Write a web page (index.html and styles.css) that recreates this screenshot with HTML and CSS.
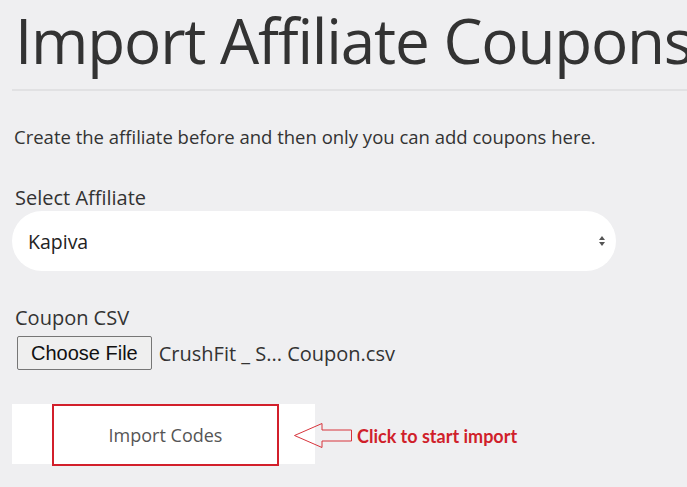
FILE: index.html
```html
<!DOCTYPE html>
<html>
<head>
<meta charset="utf-8">
<link rel="stylesheet" href="styles.css">
</head>
<body>
<div class="page">
  <h1 class="title">Import Affiliate Coupons</h1>
  <div class="divider"></div>
  <p class="intro">Create the affiliate before and then only you can add coupons here.</p>
  <div class="field field-select">
    <label class="label">Select Affiliate</label>
    <div class="select">
      <span class="select-value">Kapiva</span>
      <svg class="select-arrows" width="8" height="12" viewBox="0 0 8 12"><path d="M4 1 L7 5 L1 5 Z M4 11 L7 7 L1 7 Z" fill="#555"/></svg>
    </div>
  </div>
  <div class="field field-file">
    <label class="label">Coupon CSV</label>
    <div class="file">
      <span class="file-btn">Choose File</span>
      <span class="file-name">CrushFit _ S... Coupon.csv</span>
    </div>
  </div>
  <div class="actions">
    <div class="import-box">
      <span class="import-btn">Import Codes</span>
    </div>
    <div class="hint">
      <svg class="hint-arrow" width="60" height="28" viewBox="0 0 60 28"><path d="M1.5 13.5 L29 1.5 L29 8 L58.5 8 L58.5 19 L29 19 L29 25.5 Z" fill="none" stroke="#d8343c" stroke-width="1"/></svg>
      <span class="hint-text">Click to start import</span>
    </div>
  </div>
</div>
</body>
</html>
```
FILE: styles.css
```css
html, body {
  margin: 0;
  padding: 0;
  background: #efeff1;
}
body {
  font-family: "Open Sans", "Noto Sans", sans-serif;
  color: #333;
  overflow: hidden;
  width: 687px;
  height: 487px;
}
.page {
  padding-left: 12px;
}
.title {
  margin: 4px 0 0 0;
  font-size: 62px;
  line-height: 72px;
  font-weight: 400;
  letter-spacing: -1.2px;
  color: #333;
  white-space: nowrap;
  padding-left: 3px;
}
.divider {
  margin-top: 13px;
  height: 2px;
  background: #e1e1e3;
}
.intro {
  margin: 34px 0 0 2px;
  font-size: 18.5px;
  line-height: 24px;
  color: #333;
}
.field {
  display: flex;
  flex-direction: column;
}
.field-select {
  margin-top: 36px;
}
.label {
  font-size: 20px;
  line-height: 26px;
  padding-left: 3px;
  color: #333;
}
.select {
  margin-top: 0;
  width: 604px;
  height: 60px;
  box-sizing: border-box;
  background: #fff;
  border-radius: 30px;
  display: flex;
  align-items: center;
  justify-content: space-between;
  padding: 0 10px 0 16px;
}
.select-value {
  font-size: 19.5px;
  color: #222;
}
.field-file {
  margin-top: 34px;
}
.file {
  margin-top: 5px;
  display: flex;
  align-items: center;
  gap: 7px;
  padding-left: 5px;
}
.file-btn {
  font-family: "Liberation Sans", Arial, sans-serif;
  font-size: 20px;
  line-height: 32px;
  padding: 0 13px;
  border: 1px solid #767676;
  border-radius: 2px;
  background: #efefef;
  color: #111;
}
.file-name {
  font-size: 20px;
  color: #333;
}
.actions {
  margin-top: 34px;
  display: flex;
  align-items: flex-start;
}
.import-box {
  width: 303px;
  height: 60px;
  background: #fff;
  display: flex;
  align-items: flex-start;
  padding-left: 40px;
  box-sizing: border-box;
}
.import-btn {
  width: 227px;
  height: 62px;
  box-sizing: border-box;
  border: 2px solid #d21f2b;
  display: flex;
  align-items: center;
  justify-content: center;
  font-size: 18px;
  color: #555;
  background: #fff;
}
.hint {
  display: flex;
  align-items: center;
  margin-top: 18px;
  margin-left: -22px;
  gap: 4px;
}
.hint-arrow {
  display: block;
}
.hint-text {
  font-family: "Lato", sans-serif;
  font-weight: 700;
  font-size: 18px;
  color: #d01f2b;
}
```
